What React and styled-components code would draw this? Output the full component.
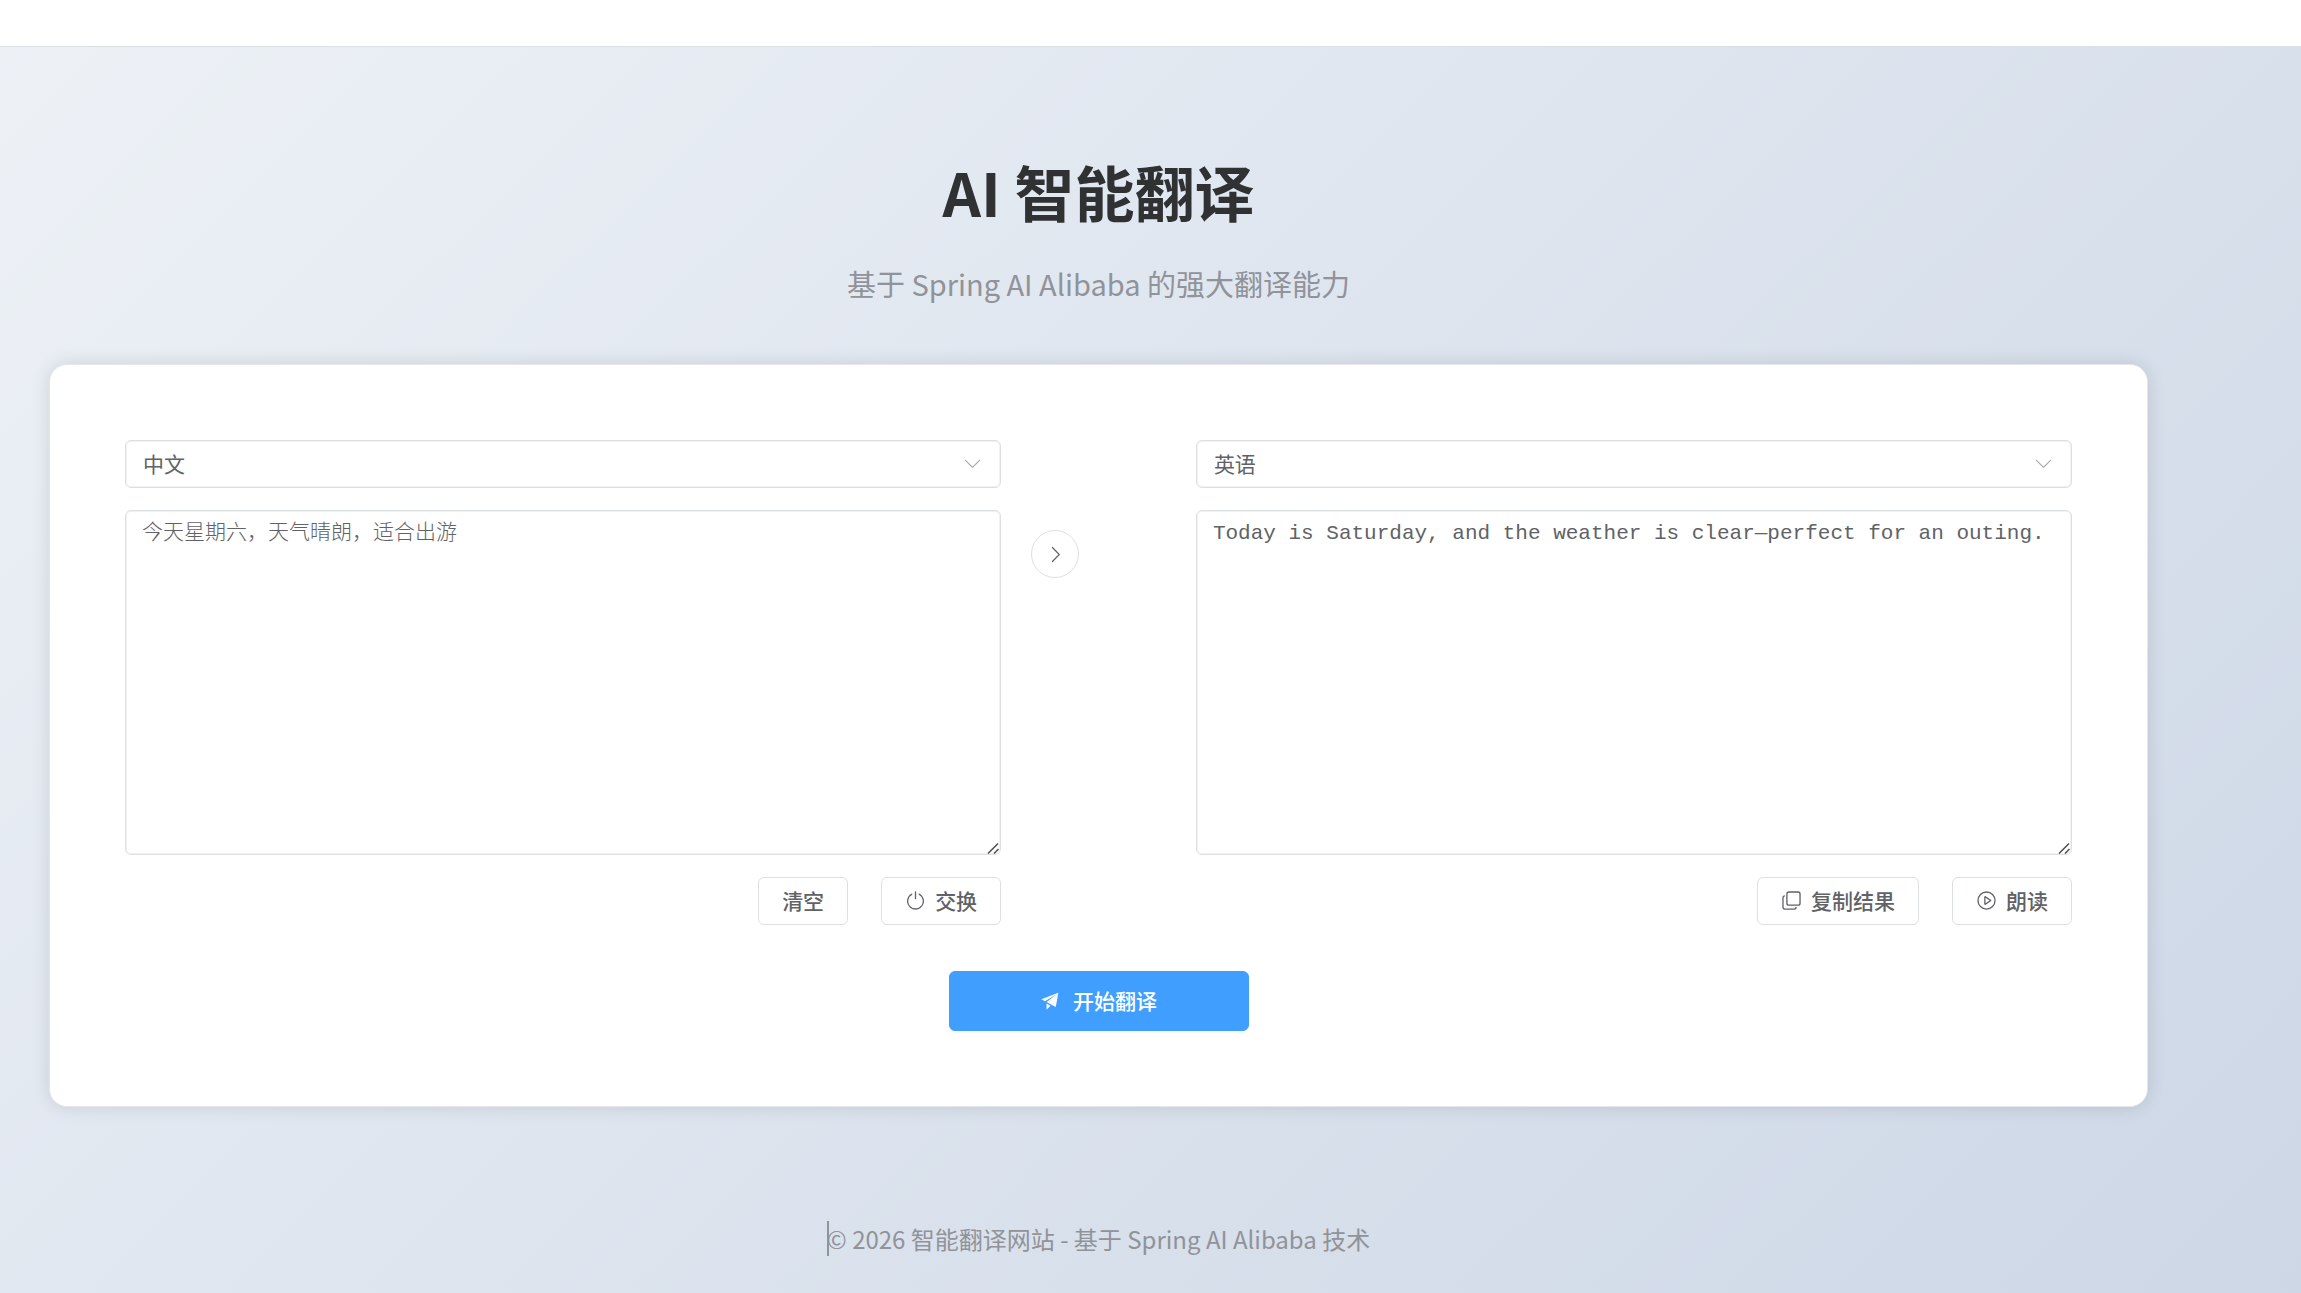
import React, { useState } from 'react';
import styled, { createGlobalStyle } from 'styled-components';

const GlobalStyle = createGlobalStyle`
  * {
    box-sizing: border-box;
  }
  body {
    margin: 0;
    font-family: "Noto Sans CJK SC", sans-serif;
    color: #303133;
  }
`;

const Page = styled.div`
  display: flex;
  flex-direction: column;
  min-height: 100vh;
`;

const TopBar = styled.header`
  height: 47px;
  background-color: #fff;
  border-bottom: 1px solid #dcdfe6;
`;

const Main = styled.main`
  flex: 1;
  padding: 99px 153px 32px 49px;
  background: linear-gradient(135deg, #edf1f6 0%, #cdd7e6 100%);
`;

const Heading = styled.div`
  margin-bottom: 59px;
  text-align: center;
`;

const Title = styled.h1`
  margin: 0 0 25px;
  font-size: 60px;
  line-height: 90px;
  font-weight: 700;
`;

const Subtitle = styled.p`
  margin: 0;
  font-size: 29px;
  line-height: 44px;
  color: #909399;
`;

const Card = styled.section`
  padding: 75px;
  background-color: #fff;
  border: 1px solid #e4e7ed;
  border-radius: 18px;
  box-shadow: 0 0 18px rgba(0, 0, 0, 0.12);
`;

const Columns = styled.div`
  display: grid;
  grid-template-columns: 11fr 2fr 11fr;
  margin: 0 -15px 46px;
`;

const Column = styled.div`
  display: flex;
  flex-direction: column;
  gap: 22px;
  min-width: 0;
  padding: 0 15px;
`;

const MiddleColumn = styled.div`
  padding: 90px 15px 0;
`;

const SelectBox = styled.div`
  position: relative;
  height: 48px;

  svg {
    position: absolute;
    top: 13px;
    right: 18px;
    color: #a8abb2;
    pointer-events: none;
  }
`;

const LanguageSelect = styled.select`
  width: 100%;
  height: 100%;
  padding: 0 17px 2px;
  appearance: none;
  background-color: #fff;
  border: 1px solid #dcdfe6;
  border-radius: 6px;
  box-shadow: inset 0 0 0 1px #f0f1f5;
  font-family: inherit;
  font-size: 21px;
  color: #606266;
`;

const TextField = styled.div`
  position: relative;
`;

const TextBox = styled.textarea`
  display: block;
  width: 100%;
  height: 345px;
  padding: 7px 16px;
  resize: vertical;
  background-color: #fff;
  border: 1px solid #dcdfe6;
  border-radius: 6px;
  box-shadow: inset 0 0 0 1px #f0f1f5;
  outline: none;
  font-family: "Courier New", "Liberation Mono", "Noto Sans CJK SC", monospace;
  font-size: 21px;
  font-weight: 300;
  line-height: 32px;
  color: #606266;

  &::-webkit-resizer {
    background: transparent;
  }
`;

const ResizeGrip = styled.svg`
  position: absolute;
  right: 2px;
  bottom: 1px;
  pointer-events: none;
`;

const Actions = styled.div`
  display: flex;
  justify-content: flex-end;
  gap: 33px;
`;

const Button = styled.button`
  display: inline-flex;
  align-items: center;
  justify-content: center;
  gap: 9px;
  height: 48px;
  padding: 0 23px 2px;
  background-color: #fff;
  border: 1px solid #dcdfe6;
  border-radius: 6px;
  font-family: inherit;
  font-size: 21px;
  font-weight: 500;
  color: #606266;
  cursor: pointer;
`;

const RoundButton = styled(Button)`
  width: 48px;
  padding: 0;
  border-radius: 50%;
`;

const PrimaryButton = styled(Button)`
  display: flex;
  gap: 12px;
  width: 300px;
  height: 60px;
  margin: 0 auto;
  background-color: #409eff;
  border-color: #409eff;
  color: #fff;
`;

const Footer = styled.footer`
  margin-top: 114px;
  text-align: center;
  font-size: 24px;
  line-height: 36px;
  color: #909399;
`;

const FooterText = styled.span`
  position: relative;
`;

const Caret = styled.span`
  position: absolute;
  top: 0;
  left: 0;
  width: 2px;
  height: 100%;
  background-color: #909399;
`;

const icons = {
  arrowDown: [
    'M831.872 340.864 512 652.672 192.128 340.864a30.592 30.592 0 0 0-42.752 0 29.12 29.12 0 0 0 0 41.6L489.664 714.24a32 32 0 0 0 44.672 0l340.288-331.712a29.12 29.12 0 0 0 0-41.728 30.592 30.592 0 0 0-42.752 0z',
  ],
  arrowRight: [
    'M340.864 149.312a30.592 30.592 0 0 0 0 42.752L652.736 512 340.864 831.872a30.592 30.592 0 0 0 0 42.752 29.12 29.12 0 0 0 41.728 0L714.24 534.336a32 32 0 0 0 0-44.672L382.592 149.376a29.12 29.12 0 0 0-41.728 0z',
  ],
  power: [
    'M352 159.872V230.4a352 352 0 1 0 320 0v-70.528A416.128 416.128 0 0 1 512 960a416 416 0 0 1-160-800.128z',
    'M512 64q32 0 32 32v320q0 32-32 32t-32-32V96q0-32 32-32z',
  ],
  copy: [
    'M768 832a128 128 0 0 1-128 128H192A128 128 0 0 1 64 832V384a128 128 0 0 1 128-128v64a64 64 0 0 0-64 64v448a64 64 0 0 0 64 64h448a64 64 0 0 0 64-64h64z',
    'M384 128a64 64 0 0 0-64 64v448a64 64 0 0 0 64 64h448a64 64 0 0 0 64-64V192a64 64 0 0 0-64-64H384zm0-64h448a128 128 0 0 1 128 128v448a128 128 0 0 1-128 128H384a128 128 0 0 1-128-128V192A128 128 0 0 1 384 64z',
  ],
  play: [
    'M512 64a448 448 0 1 1 0 896 448 448 0 0 1 0-896zm0 832a384 384 0 0 0 0-768 384 384 0 0 0 0 768zm-48-247.616L668.608 512 464 375.616v272.768zm10.624-342.656 249.472 166.336a48 48 0 0 1 0 79.872L474.624 718.272A48 48 0 0 1 400 678.336V345.6a48 48 0 0 1 74.624-39.936z',
  ],
  send: [
    'm64 448 832-320-128 704-446.08-243.328L832 192 242.816 545.472 64 448zm256 512V657.024L512 768 320 960z',
  ],
};

const Icon = ({ name }) => (
  <svg width="21" height="21" viewBox="0 0 1024 1024" fill="currentColor" aria-hidden="true">
    {icons[name].map((d) => (
      <path key={d} d={d} />
    ))}
  </svg>
);

const languages = [
  { value: 'zh', label: '中文' },
  { value: 'en', label: '英语' },
];

const LanguagePicker = ({ label, value, onChange }) => (
  <SelectBox>
    <LanguageSelect aria-label={label} value={value} onChange={(e) => onChange(e.target.value)}>
      {languages.map((language) => (
        <option key={language.value} value={language.value}>
          {language.label}
        </option>
      ))}
    </LanguageSelect>
    <Icon name="arrowDown" />
  </SelectBox>
);

const TextPanel = ({ label, ...props }) => (
  <TextField>
    <TextBox aria-label={label} spellCheck={false} {...props} />
    <ResizeGrip width="12" height="12" viewBox="0 0 12 12" aria-hidden="true">
      <path d="M1 11.5 11 1.5M7 11.5 11.5 7" fill="none" stroke="#4c4d4f" strokeWidth="1.5" />
    </ResizeGrip>
  </TextField>
);

const App = () => {
  const [sourceLang, setSourceLang] = useState('zh');
  const [targetLang, setTargetLang] = useState('en');
  const [sourceText, setSourceText] = useState('今天星期六，天气晴朗，适合出游');
  const [resultText, setResultText] = useState(
    'Today is Saturday, and the weather is clear—perfect for an outing.'
  );

  const handleClear = () => {
    setSourceText('');
    setResultText('');
  };

  const handleSwap = () => {
    setSourceLang(targetLang);
    setTargetLang(sourceLang);
    setSourceText(resultText);
    setResultText(sourceText);
  };

  const handleCopy = () => {
    navigator.clipboard.writeText(resultText);
  };

  const handleSpeak = () => {
    window.speechSynthesis.speak(new SpeechSynthesisUtterance(resultText));
  };

  return (
    <Page>
      <GlobalStyle />
      <TopBar />
      <Main>
        <Heading>
          <Title>AI 智能翻译</Title>
          <Subtitle>基于 Spring AI Alibaba 的强大翻译能力</Subtitle>
        </Heading>
        <Card>
          <Columns>
            <Column>
              <LanguagePicker label="源语言" value={sourceLang} onChange={setSourceLang} />
              <TextPanel
                label="原文"
                value={sourceText}
                onChange={(e) => setSourceText(e.target.value)}
              />
              <Actions>
                <Button type="button" onClick={handleClear}>清空</Button>
                <Button type="button" onClick={handleSwap}>
                  <Icon name="power" />
                  交换
                </Button>
              </Actions>
            </Column>
            <MiddleColumn>
              <RoundButton type="button" aria-label="切换" onClick={handleSwap}>
                <Icon name="arrowRight" />
              </RoundButton>
            </MiddleColumn>
            <Column>
              <LanguagePicker label="目标语言" value={targetLang} onChange={setTargetLang} />
              <TextPanel label="译文" readOnly value={resultText} />
              <Actions>
                <Button type="button" onClick={handleCopy}>
                  <Icon name="copy" />
                  复制结果
                </Button>
                <Button type="button" onClick={handleSpeak}>
                  <Icon name="play" />
                  朗读
                </Button>
              </Actions>
            </Column>
          </Columns>
          <PrimaryButton type="button">
            <Icon name="send" />
            开始翻译
          </PrimaryButton>
        </Card>
        <Footer>
          <FooterText>
            <Caret />© 2026 智能翻译网站 - 基于 Spring AI Alibaba 技术
          </FooterText>
        </Footer>
      </Main>
    </Page>
  );
};

export default App;
